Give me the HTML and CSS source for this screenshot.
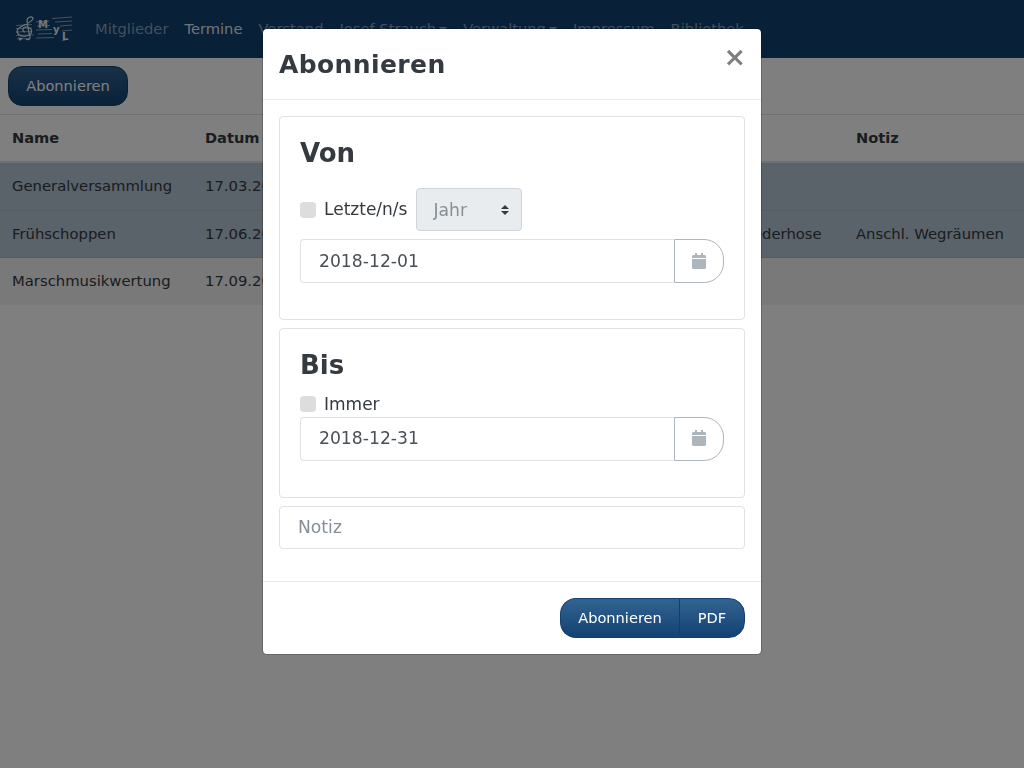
FILE: index.html
```html
<!DOCTYPE html>
<html lang="de">
<head>
<meta charset="utf-8">
<title>Termine</title>
<link rel="stylesheet" href="styles.css">
</head>
<body>
<nav class="navbar">
  <a class="brand" href="#">
    <svg class="logo" viewBox="0 0 56 26" width="56" height="26" fill="none" stroke="#fff" stroke-width="0.6">
      <path d="M0 9.500L16 8.500M20 6L33 5M36 2.500L56 1M0 12.500L16 12M21 10L34 9.500M39 6L56 5M0 16L16 15.500M20 14L36 13.500M44 10L56 9M0 19.500L18 19M22 18L36 17.500M46 15L56 14M1 23L14 22.500M20 22L38 21.500M46 24.500L50 24"/>
      <path stroke-width="1.200" d="M10 23C14 25 15 22 13 17L11 5C11 1 15 0 17 2C18 6 6 9 2 13C-1 18 5 21 10 20C17 19 18 12 10 11C6 11 6 16 9 16"/>
      <path fill="#fff" stroke="none" d="M2 21.500L7 22L4 25Z"/>
      <text class="logo-letter" x="22" y="12">M</text>
      <text class="logo-letter" x="37" y="17">y</text>
      <text class="logo-letter" x="46" y="24">L</text>
    </svg>
  </a>
  <ul class="nav-list">
    <li><a class="nav-link" href="#">Mitglieder</a></li>
    <li><a class="nav-link active" href="#">Termine</a></li>
    <li><a class="nav-link" href="#">Verstand</a></li>
    <li><a class="nav-link caret" href="#">Josef Strauch</a></li>
    <li><a class="nav-link caret" href="#">Verwaltung</a></li>
    <li><a class="nav-link" href="#">Impressum</a></li>
    <li><a class="nav-link" href="#">Bibliothek</a></li>
  </ul>
</nav>
<main>
  <div class="toolbar"><button class="btn btn-round" type="button">Abonnieren</button></div>
  <table class="events">
    <colgroup>
      <col class="col-name"><col class="col-date"><col class="col-time"><col class="col-place"><col class="col-dress"><col class="col-note">
    </colgroup>
    <thead>
      <tr><th>Name</th><th>Datum</th><th></th><th></th><th></th><th>Notiz</th></tr>
    </thead>
    <tbody>
      <tr class="tinted"><td>Generalversammlung</td><td>17.03.2018</td><td></td><td></td><td></td><td></td></tr>
      <tr class="tinted"><td>Frühschoppen</td><td>17.06.2018</td><td></td><td></td><td>Lederhose</td><td>Anschl. Wegräumen</td></tr>
      <tr class="striped"><td>Marschmusikwertung</td><td>17.09.2018</td><td></td><td></td><td>At</td><td></td></tr>
    </tbody>
  </table>
</main>
<div class="backdrop"></div>
<section class="modal">
  <header class="modal-header">
    <h5 class="modal-title">Abonnieren</h5>
    <button class="close" type="button">×</button>
  </header>
  <div class="modal-body">
    <fieldset class="panel panel-from">
      <h3 class="panel-title title-from">Von</h3>
      <div class="check-row">
        <span class="check"></span><label class="check-label">Letzte/n/s</label>
        <select class="unit" disabled><option>Jahr</option></select>
      </div>
      <div class="date-group">
        <input class="date-input" type="text" value="2018-12-01" readonly>
        <button class="date-btn" type="button">
          <svg class="cal" viewBox="0 0 448 512" width="14" height="16"><path d="M12 192h424c6.600 0 12 5.400 12 12v260c0 26.500-21.500 48-48 48H48c-26.500 0-48-21.500-48-48V204c0-6.600 5.400-12 12-12zm436-44v-36c0-26.500-21.500-48-48-48h-48V12c0-6.600-5.400-12-12-12h-40c-6.600 0-12 5.400-12 12v52H160V12c0-6.600-5.400-12-12-12h-40c-6.600 0-12 5.400-12 12v52H48C21.500 64 0 85.500 0 112v36c0 6.600 5.400 12 12 12h424c6.600 0 12-5.400 12-12z"/></svg>
        </button>
      </div>
    </fieldset>
    <fieldset class="panel panel-to">
      <h3 class="panel-title title-to">Bis</h3>
      <div class="check-row check-row-plain">
        <span class="check"></span><label class="check-label">Immer</label>
      </div>
      <div class="date-group date-group-to">
        <input class="date-input" type="text" value="2018-12-31" readonly>
        <button class="date-btn" type="button">
          <svg class="cal" viewBox="0 0 448 512" width="14" height="16"><path d="M12 192h424c6.600 0 12 5.400 12 12v260c0 26.500-21.500 48-48 48H48c-26.500 0-48-21.500-48-48V204c0-6.600 5.400-12 12-12zm436-44v-36c0-26.500-21.500-48-48-48h-48V12c0-6.600-5.400-12-12-12h-40c-6.600 0-12 5.400-12 12v52H160V12c0-6.600-5.400-12-12-12h-40c-6.600 0-12 5.400-12 12v52H48C21.500 64 0 85.500 0 112v36c0 6.600 5.400 12 12 12h424c6.600 0 12-5.400 12-12z"/></svg>
        </button>
      </div>
    </fieldset>
    <input class="note-input" type="text" placeholder="Notiz">
  </div>
  <footer class="modal-footer">
    <div class="btn-group">
      <button class="btn btn-left" type="button">Abonnieren</button>
      <button class="btn btn-right" type="button">PDF</button>
    </div>
  </footer>
</section>
</body>
</html>
```
FILE: styles.css
```css
* { box-sizing: border-box; }
html, body { height: 100%; }
body {
  margin: 0;
  background: #fff;
  color: #343a40;
  font-family: "DejaVu Sans", sans-serif;
  font-size: 14.600px;
  line-height: 22.500px;
  overflow: hidden;
}
.navbar {
  display: flex;
  align-items: center;
  height: 58px;
  padding: 0 16px;
  background: #104070;
}
.brand { display: flex; margin-right: 15px; }
.logo { display: block; opacity: .9; }
.logo-letter { font-size: 10px; font-weight: 700; fill: #fff; stroke: none; font-family: "DejaVu Sans", sans-serif; }
.nav-list { display: flex; margin: 0; padding: 0; list-style: none; font-size: 14.700px; }
.nav-link {
  display: block;
  padding: 8px;
  color: rgba(255, 255, 255, .5);
  text-decoration: none;
  white-space: nowrap;
}
.nav-link.active { color: rgba(255, 255, 255, .9); }
.caret::after {
  content: "";
  display: inline-block;
  margin-left: 3px;
  vertical-align: 2px;
  border-top: 5px solid;
  border-left: 4.500px solid transparent;
  border-right: 4.500px solid transparent;
}
.toolbar { padding: 8px; height: 56px; }
.btn {
  font: inherit;
  color: #fff;
  border: 1px solid #104070;
  background: linear-gradient(#336390, #134273);
  cursor: pointer;
}
.btn-round {
  width: 120px;
  height: 40px;
  border-radius: 14px;
}
.events {
  width: 1024px;
  table-layout: fixed;
  border-collapse: collapse;
  font-size: 14.800px;
}
.col-name { width: 193px; }
.col-date { width: 130px; }
.col-time { width: 100px; }
.col-place { width: 310px; }
.col-dress { width: 111px; }
.col-note { width: 180px; }
.events th, .events td {
  padding: 12px;
  text-align: left;
  vertical-align: top;
  border-top: 1px solid #dee2e6;
  white-space: nowrap;
}
.events th { border-bottom: 2px solid #dee2e6; padding-bottom: 11.500px; font-size: 14.600px; }
.tinted td { background: #b4c4d4; border-top-color: #a9b8c8; }
.striped td { background: #f2f2f2; border-top-color: #a9b8c8; }
.backdrop {
  position: fixed;
  inset: 0;
  background: rgba(0, 0, 0, .5);
}
.modal {
  position: fixed;
  top: 28px;
  left: 262px;
  width: 500px;
  height: 627px;
  display: flex;
  flex-direction: column;
  background: #fff;
  border: 1px solid rgba(0, 0, 0, .2);
  border-radius: 5px;
  background-clip: padding-box;
  color: #343a40;
}
.modal-header {
  display: flex;
  justify-content: space-between;
  align-items: flex-start;
  height: 71px;
  padding: 17px 15px 16px 16px;
  border-bottom: 1px solid #e9ecef;
}
.modal-title { margin: 0; font-size: 25px; font-weight: 700; line-height: 37px; letter-spacing: .4px; }
.close {
  margin: -1px 0 0;
  padding: 0;
  border: 0;
  background: none;
  color: #000;
  opacity: .5;
  font: 700 27px/24px "DejaVu Sans", sans-serif;
}
.modal-body { flex: 1; display: flex; flex-direction: column; gap: 8px; padding: 16px; }
.panel {
  margin: 0;
  padding: 20px;
  min-width: 0;
  border: 1px solid #dee2e6;
  border-radius: 4px;
}
.panel-from { height: 204px; }
.panel-to { height: 170px; }
.panel-title { margin: 1px 0 0; font-size: 26px; font-weight: 700; line-height: 31px; }
.title-from { margin-bottom: 19px; }
.title-to { margin-bottom: 10px; }
.check-row { display: flex; align-items: center; height: 43px; margin-bottom: 8px; }
.check-row-plain { height: 26px; margin-bottom: 0; }
.check { width: 16px; height: 16px; border-radius: 4px; background: #dddddd; margin-right: 8px; }
.check-label { font-size: 17px; line-height: 1; margin-right: 9px; }
.unit {
  width: 106px;
  height: 43px;
  padding: 0 16px;
  appearance: none;
  border: 1px solid #ced4da;
  border-radius: 4px;
  color: #868e96;
  opacity: 1;
  font: 17.200px "DejaVu Sans", sans-serif;
  background: #e9ecef url("data:image/svg+xml,%3csvg xmlns='http://www.w3.org/2000/svg' viewBox='0 0 4 5'%3e%3cpath fill='%23343a40' d='M2 0L0 2h4zm0 5L0 3h4z'/%3e%3c/svg%3e") no-repeat right 12px center / 8px 10px;
}
.date-group { display: flex; height: 44px; }
.date-input, .note-input {
  min-width: 0;
  border: 1px solid #dee2e6;
  border-radius: 4px;
  background: #fff;
  font: 17.200px "DejaVu Sans", sans-serif;
  color: #495057;
  outline: none;
}
.date-input {
  flex: 1;
  padding: 0 18px;
  border-right: 0;
  border-radius: 4px 0 0 4px;
}
.date-group-to .date-input { padding-bottom: 2px; }
.date-group-to .cal { margin-bottom: 2px; }
.date-btn {
  display: flex;
  align-items: center;
  justify-content: center;
  width: 50px;
  padding: 0;
  border: 1px solid #adb5bd;
  border-radius: 0 20px 20px 0;
  background: #fff;
}
.cal { fill: #adb5bd; display: block; }
.note-input { height: 43px; padding: 0 18px 2px; flex: none; width: 100%; }
.note-input::placeholder { color: #868e96; opacity: 1; }
.modal-footer {
  display: flex;
  justify-content: flex-end;
  height: 73px;
  padding: 16px;
  border-top: 1px solid #e9ecef;
}
.btn-group { display: flex; height: 40px; }
.btn-left { width: 120px; border-radius: 16px 0 0 16px; border-right-color: #133a66; }
.btn-right { width: 66px; margin-left: -1px; border-radius: 0 16px 16px 0; }
```
